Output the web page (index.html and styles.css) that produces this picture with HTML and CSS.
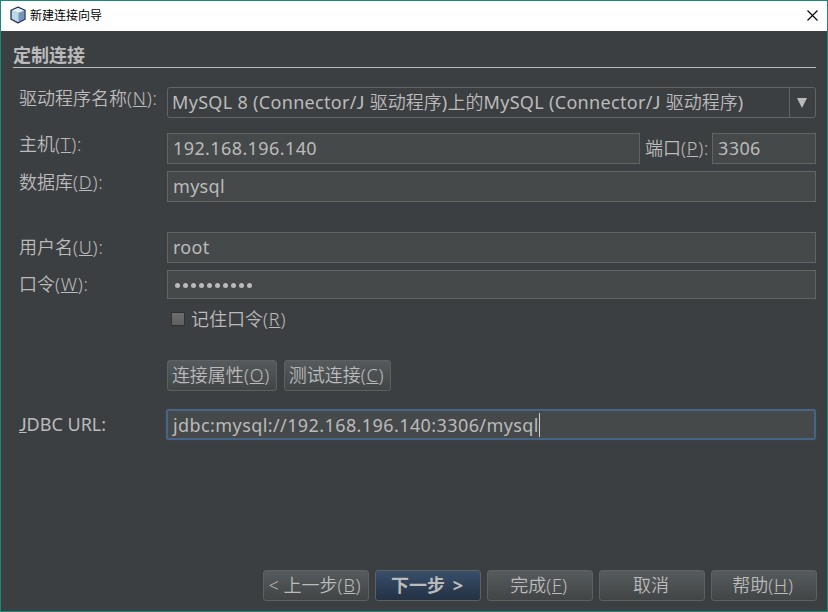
FILE: index.html
```html
<!DOCTYPE html>
<html lang="zh-CN">
<head>
<meta charset="utf-8">
<title>新建连接向导</title>
<link rel="stylesheet" href="styles.css">
</head>
<body>
<div class="window">
  <header class="titlebar">
    <svg class="logo" width="16" height="18" viewBox="0 0 16 18">
      <path d="M8 1.2 15 4.3V13.2L8 16.8 1 13.2V4.3Z" fill="#a9c4d8" stroke="#27345f" stroke-width="1.3" stroke-linejoin="round"/>
      <path d="M8 2 14 4.6 8.6 6.6 2 4.6Z" fill="#e4f2f6"/>
      <path d="M2 5 8.6 7V16L2 12.8Z" fill="#b9dbe8"/>
      <path d="M8.6 7 14 5V12.8L8.6 16Z" fill="#7894bd"/>
    </svg>
    <span class="title">新建连接向导</span>
    <svg class="close" width="11" height="11" viewBox="0 0 11 11"><path d="M.5.5 10.5 10.5M10.5.5.5 10.5" stroke="#000" stroke-width="1.1"/></svg>
  </header>
  <main class="content">
    <h1 class="heading">定制连接</h1>
    <div class="row row-driver">
      <label class="label raised"><span>驱动程序名称<span class="key">(<u>N</u>):</span></span></label>
      <div class="combo"><span class="combo-text"><span class="driver">MySQL 8 (Connector/<span class="jay">J</span> </span>驱动程序<span class="driver">)</span>上的<span class="driver">MySQL (Connector/<span class="jay">J</span> </span>驱动程序<span class="driver">)</span></span><span class="combo-arrow"><svg width="10" height="10" viewBox="0 0 10 10"><path d="M0 0H10L5 10Z" fill="#bbb"/></svg></span></div>
    </div>
    <div class="row row-host">
      <label class="label raised"><span>主机<span class="key">(<u>T</u>):</span></span></label>
      <div class="field host"><span class="digits">192.168.196.140</span></div>
      <label class="port-label"><span>端口<span class="key">(<u>P</u>):</span></span></label>
      <div class="field port"><span class="digits">3306</span></div>
    </div>
    <div class="row row-db">
      <label class="label raised"><span>数据库<span class="key">(<u>D</u>):</span></span></label>
      <div class="field"><span class="latin">mysql</span></div>
    </div>
    <div class="row row-user">
      <label class="label"><span>用户名<span class="key">(<u>U</u>):</span></span></label>
      <div class="field"><span class="latin">root</span></div>
    </div>
    <div class="row row-password">
      <label class="label"><span>口令<span class="key">(<u>W</u>):</span></span></label>
      <div class="field"><span class="dots"><i></i><i></i><i></i><i></i><i></i><i></i><i></i><i></i><i></i><i></i></span></div>
    </div>
    <div class="remember"><span class="check"></span><span>记住口令<span class="key">(<u>R</u>)</span></span></div>
    <div class="actions">
      <button class="button properties"><span>连接属性<span class="key">(<u>O</u>)</span></span></button>
      <button class="button test"><span>测试连接<span class="key">(<u>C</u>)</span></span></button>
    </div>
    <div class="row row-url">
      <label class="label"><span class="jdbc"><u class="jay">J</u>DBC URL:</span></label>
      <div class="field focused"><span class="url">jdbc:mysql://192.168.196.140:3306/mysql</span><span class="caret"></span></div>
    </div>
  </main>
  <footer class="footer">
    <button class="button"><span>&lt; 上一步<span class="key">(<u>B</u>)</span></span></button>
    <button class="button primary"><span>下一步 &gt;</span></button>
    <button class="button"><span>完成<span class="key">(<u>F</u>)</span></span></button>
    <button class="button"><span>取消</span></button>
    <button class="button"><span>帮助<span class="key">(<u>H</u>)</span></span></button>
  </footer>
</div>
</body>
</html>
```
FILE: styles.css
```css
* { box-sizing: border-box; }
body {
  margin: 0;
  font: 18px/24px "Noto Sans", "Noto Sans CJK SC", sans-serif;
  font-weight: 350;
  color: #bbb;
}
u {
  text-decoration-thickness: 1px;
  text-underline-offset: 1px;
  text-decoration-skip-ink: none;
}
.window {
  display: flex;
  flex-direction: column;
  width: 828px;
  height: 612px;
  border: 1px solid #198a79;
  background: #3c3f41;
  white-space: nowrap;
}
.titlebar {
  display: flex;
  align-items: center;
  height: 30px;
  padding: 0 9px 2px 9px;
  background: #fff;
  color: #000;
  font-size: 12px;
}
.logo { margin-right: 4px; }
.title { flex: 1; padding-top: 2px; font-weight: 400; }
.content { flex: 1; padding: 12px 11px 0 12px; }
.heading {
  height: 25px;
  margin: 0;
  border-bottom: 1px solid #bbb;
  font-size: 18px;
  line-height: 25px;
  font-weight: 700;
}
.row { display: flex; align-items: center; height: 31px; }
.row-driver { margin-top: 19px; }
.row-host { margin-top: 15px; }
.row-db { margin-top: 7px; }
.row-user { margin-top: 30px; }
.row-password { height: 29px; margin-top: 7px; }
.row-url { margin-top: 18px; }
.label { flex: none; width: 154px; padding: 0 0 2px 6px; }
.raised { padding-bottom: 9px; }
.key { letter-spacing: .8px; }
.latin { font-weight: 400; letter-spacing: .3px; }
.driver { font-weight: 400; letter-spacing: .32px; }
.jay { font-family: Lato, sans-serif; }
.jdbc { font-weight: 400; }
.url { font-weight: 400; letter-spacing: .41px; }
.combo, .field {
  display: flex;
  flex: 1;
  align-items: center;
  align-self: stretch;
  border: 1px solid #646464;
}
.combo { border-radius: 3px; padding-left: 4px; }
.combo-text { flex: 1; padding-bottom: 2px; }
.combo-arrow {
  display: flex;
  align-items: center;
  justify-content: center;
  align-self: stretch;
  width: 26px;
  padding-right: 1px;
  border-left: 1px solid #646464;
}
.field { padding: 0 0 2px 5px; background: #45494a; }
.host { flex: none; width: 473px; }
.port-label { width: 72px; padding: 0 0 2px 5px; }
.digits { font-weight: 400; letter-spacing: .4px; }
.dots { display: flex; gap: 3px; padding: 4px 0 0 2px; }
.dots i { width: 5px; height: 5px; border-radius: 50%; background: #bbb; }
.remember { display: flex; align-items: center; height: 24px; margin-top: 8px; padding-left: 158px; }
.check {
  width: 14px;
  height: 14px;
  margin-right: 6px;
  border: 1px solid #2f3233;
  border-radius: 1px;
  background: linear-gradient(#6d6d6d, #606060);
}
.actions { display: flex; gap: 7px; margin-top: 29px; padding-left: 154px; }
.button {
  display: flex;
  align-items: center;
  justify-content: center;
  width: 106px;
  height: 31px;
  padding: 0 2px 2px 0;
  border: 1px solid #5e6162;
  border-radius: 3px;
  background: linear-gradient(#555a5c, #414546);
  color: inherit;
  font: inherit;
}
.properties { width: 110px; }
.test { width: 107px; }
.focused {
  margin: 0 0 0 -1px;
  padding: 0 0 0 5px;
  border: 2px solid #466488;
  border-radius: 3px;
  box-shadow: 0 0 1px #466488;
}
.caret { width: 1px; height: 24px; background: #ccc; }
.footer { display: flex; justify-content: flex-end; gap: 6px; padding: 0 10px 10px 0; }
.primary {
  background: linear-gradient(#384f6b, #233143);
  font-weight: 700;
  word-spacing: 3px;
}
```
